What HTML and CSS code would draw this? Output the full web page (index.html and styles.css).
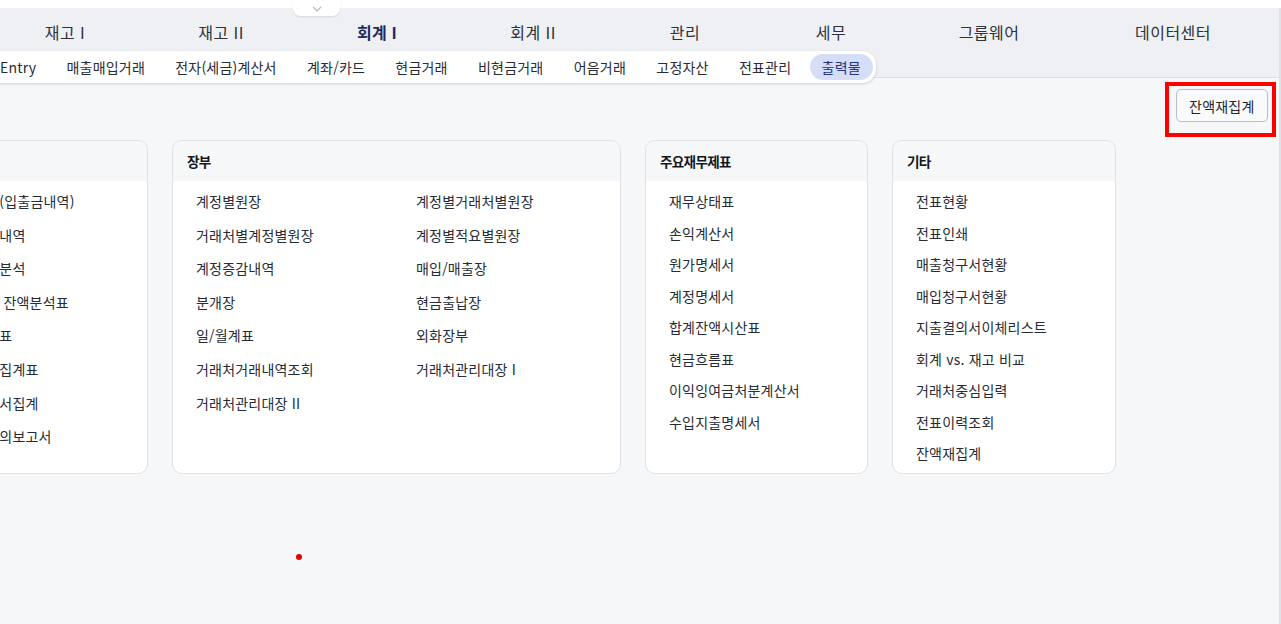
FILE: index.html
```html
<!DOCTYPE html>
<html lang="ko">
<head>
<meta charset="utf-8">
<title>회계 I - 출력물</title>
<link rel="stylesheet" href="styles.css">
</head>
<body>
<div class="topstrip">
  <div class="handle">
    <svg width="10" height="6" viewBox="0 0 10 6"><polyline points="1,1 5,5 9,1" fill="none" stroke="#b3b8c1" stroke-width="1.2"/></svg>
  </div>
</div>
<div class="page">
  <header class="header">
    <nav class="mainnav">
      <div class="mi w156">재고 I</div>
      <div class="mi w156">재고 II</div>
      <div class="mi w156 active">회계 I</div>
      <div class="mi w156">회계 II</div>
      <div class="mi w148">관리</div>
      <div class="mi w144">세무</div>
      <div class="mi w172">그룹웨어</div>
      <div class="mi w196">데이터센터</div>
    </nav>
    <nav class="subnav">
      <div class="si">Entry</div>
      <div class="si">매출매입거래</div>
      <div class="si">전자(세금)계산서</div>
      <div class="si">계좌/카드</div>
      <div class="si">현금거래</div>
      <div class="si">비현금거래</div>
      <div class="si">어음거래</div>
      <div class="si">고정자산</div>
      <div class="si">전표관리</div>
      <div class="si on">출력물</div>
    </nav>
  </header>

  <div class="toolbar">
    <div class="highlight">
      <button class="btn">잔액재집계</button>
    </div>
  </div>

  <div class="cards">
    <section class="card c1">
      <div class="card-h">자금</div>
      <div class="card-b tall">
        <div class="col">
          <div class="it">예금현황(입출금내역)</div>
          <div class="it">자금이체내역</div>
          <div class="it">채권연령분석</div>
          <div class="it">채권채무 잔액분석표</div>
          <div class="it">채권채무표</div>
          <div class="it">거래처별집계표</div>
          <div class="it">세금계산서집계</div>
          <div class="it">부서별품의보고서</div>
        </div>
      </div>
    </section>

    <section class="card c2">
      <div class="card-h">장부</div>
      <div class="card-b tall two">
        <div class="col">
          <div class="it">계정별원장</div>
          <div class="it">거래처별계정별원장</div>
          <div class="it">계정증감내역</div>
          <div class="it">분개장</div>
          <div class="it">일/월계표</div>
          <div class="it">거래처거래내역조회</div>
          <div class="it">거래처관리대장 II</div>
        </div>
        <div class="col">
          <div class="it">계정별거래처별원장</div>
          <div class="it">계정별적요별원장</div>
          <div class="it">매입/매출장</div>
          <div class="it">현금출납장</div>
          <div class="it">외화장부</div>
          <div class="it">거래처관리대장 I</div>
        </div>
      </div>
    </section>

    <section class="card c3">
      <div class="card-h">주요재무제표</div>
      <div class="card-b">
        <div class="col">
          <div class="it">재무상태표</div>
          <div class="it">손익계산서</div>
          <div class="it">원가명세서</div>
          <div class="it">계정명세서</div>
          <div class="it">합계잔액시산표</div>
          <div class="it">현금흐름표</div>
          <div class="it">이익잉여금처분계산서</div>
          <div class="it">수입지출명세서</div>
        </div>
      </div>
    </section>

    <section class="card c4">
      <div class="card-h">기타</div>
      <div class="card-b">
        <div class="col">
          <div class="it">전표현황</div>
          <div class="it">전표인쇄</div>
          <div class="it">매출청구서현황</div>
          <div class="it">매입청구서현황</div>
          <div class="it">지출결의서이체리스트</div>
          <div class="it">회계 vs. 재고 비교</div>
          <div class="it">거래처중심입력</div>
          <div class="it">전표이력조회</div>
          <div class="it">잔액재집계</div>
        </div>
      </div>
    </section>
  </div>
  <div class="marker"></div>
</div>
</body>
</html>
```

FILE: styles.css
```css
* { box-sizing: border-box; }
html, body { margin: 0; padding: 0; }
body {
  width: 1281px;
  height: 624px;
  overflow: hidden;
  background: #f6f7f9;
  font-family: "Noto Sans CJK KR", "Noto Sans", sans-serif;
  color: #222731;
}

.topstrip {
  height: 8px;
  background: #ffffff;
  position: relative;
  z-index: 3;
}
.handle {
  position: absolute;
  left: 293px;
  top: 0;
  width: 47px;
  height: 16px;
  background: #ffffff;
  border-radius: 0 0 8px 8px;
  box-shadow: 0 1px 2px rgba(0,0,0,0.10);
  display: flex;
  justify-content: center;
  align-items: center;
  padding-top: 2px;
}
.handle svg { display: block; }

.page {
  position: relative;
  height: 616px;
  border-right: 2px solid #e0e2e6;
  overflow: hidden;
}

.header {
  height: 70px;
  background: #eff0f3;
  border-bottom: 1px solid #dcdfe4;
}
.mainnav {
  display: flex;
  margin-left: -13px;
  height: 43px;
  padding-top: 5px;
}
.mi {
  flex: none;
  display: flex;
  justify-content: center;
  align-items: center;
  font-size: 16px;
  letter-spacing: 0.45px;
  color: #2c313a;
  height: 37px;
}
.mi.active { font-weight: 700; color: #1d2a5e; letter-spacing: 0.2px; }
.w156 { width: 156px; }
.w148 { width: 148px; }
.w144 { width: 144px; }
.w172 { width: 172px; }
.w196 { width: 196px; }

.subnav {
  position: relative;
  z-index: 2;
  display: inline-flex;
  align-items: center;
  gap: 6.3px;
  margin-left: -12px;
  height: 32px;
  padding: 3px 3px 3px 0;
  background: #ffffff;
  border-radius: 0 14px 14px 0;
  box-shadow: 0 1px 3px rgba(0,0,0,0.16);
}
.si {
  font-size: 14px;
  letter-spacing: 0.2px;
  color: #262b35;
  padding: 0 12px;
  height: 26px;
  line-height: 26px;
  border-radius: 13px;
  white-space: nowrap;
}
.si.on {
  background: #d6ddf7;
  color: #23357e;
  padding: 0 12px;
}

.toolbar {
  display: flex;
  justify-content: flex-end;
  padding: 4px 3px 0 0;
}
.highlight {
  border: 4px solid #ff0000;
  padding: 3px 4px 11px 7px;
}
.btn {
  display: block;
  height: 33px;
  padding: 0 12.5px;
  font-family: inherit;
  font-size: 14px;
  letter-spacing: 0.2px;
  color: #22262e;
  background: #f9fafb;
  border: 1px solid #b9bdc4;
  border-radius: 5px;
}

.cards {
  display: flex;
  align-items: flex-start;
  gap: 24px;
  margin-top: 3px;
  margin-left: -76px;
}
.card {
  flex: none;
  height: 334px;
  background: #ffffff;
  border: 1px solid #dfe1e6;
  border-radius: 10px;
  overflow: hidden;
}
.c1 { width: 224px; }
.c2 { width: 449px; }
.c3 { width: 223px; }
.c4 { width: 224px; }

.card-h {
  height: 40px;
  background: #f6f7f9;
  padding: 0 14px;
  display: flex;
  align-items: center;
  font-size: 13.6px;
  letter-spacing: -0.7px;
  font-weight: 700;
  color: #14171d;
}
.card-b {
  display: flex;
  padding: 5px 0 0 23px;
}
.card-b.tall { padding-top: 4px; }
.c1 .card-b { padding-left: 22px; }
.two .col:first-child { width: 220px; }
.it {
  font-size: 14px;
  letter-spacing: 0.2px;
  color: #262b35;
  height: 31.5px;
  line-height: 31.5px;
  white-space: nowrap;
}
.tall .it {
  height: 33.6px;
  line-height: 33.6px;
}

.marker {
  position: absolute;
  left: 296px;
  top: 546px;
  width: 6px;
  height: 6px;
  border-radius: 50%;
  background: #e60000;
}
```
